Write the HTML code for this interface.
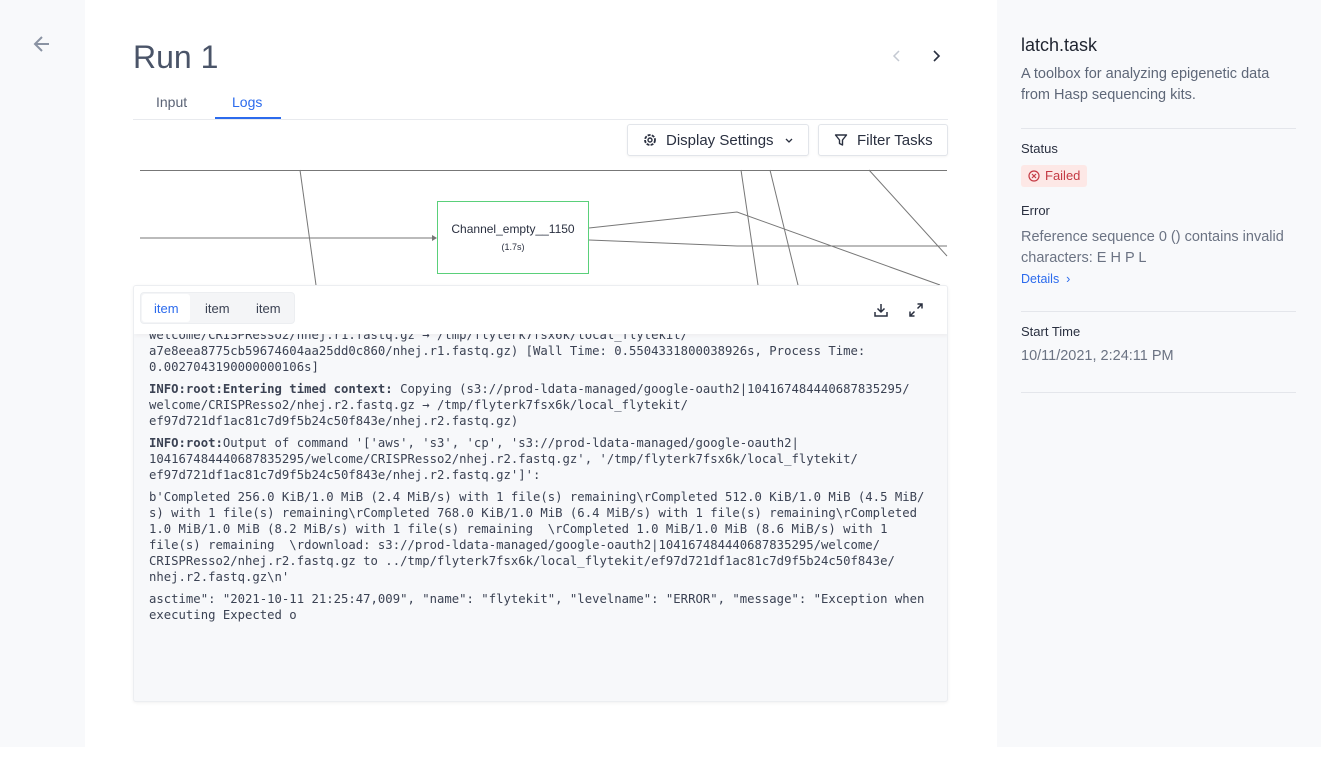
<!DOCTYPE html>
<html><head><meta charset="utf-8"><style>
*{box-sizing:border-box;margin:0;padding:0}
body{width:1321px;height:763px;background:#fff;font-family:"Liberation Sans",sans-serif;position:relative;overflow:hidden}
.left{position:absolute;left:0;top:0;width:85px;height:747px;background:#f8f9fb}
.right{position:absolute;left:997px;top:0;width:324px;height:747px;background:#f8f9fb}
.abs{position:absolute}
.mono{font-family:"DejaVu Sans Mono","Liberation Mono",monospace;font-size:12.27px;line-height:16px;color:#3b4253;white-space:pre}
.btn{position:absolute;top:124px;height:32px;border:1px solid #e2e5ea;border-radius:3px;background:#fff;font-size:15px;color:#2a3040;display:flex;align-items:center;box-shadow:0 1px 2px rgba(0,0,0,.05)}
.lbl{font-size:13px;color:#2a3040}
.hr{position:absolute;left:1021px;width:275px;height:1px;background:#e4e6eb}
</style></head><body>
<div class="left"></div>
<div class="right"></div>
<svg class="abs" style="left:32px;top:34px" width="20" height="20" viewBox="0 0 20 20"><path d="M17 10H3M10 3L3 10l7 7" fill="none" stroke="#8a93a3" stroke-width="2"/></svg>
<div class="abs" style="left:133px;top:39px;font-size:32px;color:#4a5468">Run 1</div>
<svg class="abs" style="left:890px;top:49px" width="14" height="14"><path d="M9 2L4 7l5 5" fill="none" stroke="#c4c9d2" stroke-width="1.5"/></svg>
<svg class="abs" style="left:929px;top:49px" width="14" height="14"><path d="M5 2l5 5-5 5" fill="none" stroke="#2a3040" stroke-width="1.6"/></svg>
<div class="abs" style="left:156px;top:94px;font-size:14px;color:#5a6375">Input</div>
<div class="abs" style="left:232px;top:94px;font-size:14px;color:#2c6bed">Logs</div>
<div class="abs" style="left:133px;top:119px;width:815px;height:1px;background:#e8eaee"></div>
<div class="abs" style="left:215px;top:117px;width:66px;height:2px;background:#2c6bed"></div>
<div class="btn" style="left:627px;width:182px;padding-left:15px">
<svg width="14" height="14" viewBox="0 0 14 14"><circle cx="7" cy="7" r="5" fill="none" stroke="#2a3040" stroke-width="1.8" stroke-dasharray="3 1.2"/><circle cx="7" cy="7" r="2" fill="none" stroke="#2a3040" stroke-width="1.4"/></svg>
<span style="margin-left:9px">Display Settings</span>
<svg style="margin-left:10px" width="10" height="10"><path d="M2 4l3 3 3-3" fill="none" stroke="#2a3040" stroke-width="1.3"/></svg></div>
<div class="btn" style="left:818px;width:130px;padding-left:15px">
<svg width="14" height="14" viewBox="0 0 14 14"><path d="M1.5 2h11L8.5 7v5L5.5 10.5V7z" fill="none" stroke="#2a3040" stroke-width="1.4" stroke-linejoin="round"/></svg>
<span style="margin-left:9px">Filter Tasks</span></div>
<svg class="abs" style="left:0;top:0" width="1000" height="300">
<g stroke="#777" stroke-width="1" fill="none">
<path d="M140 170.5H947"/>
<path d="M300 170L316 285"/>
<path d="M741 170L758 285"/>
<path d="M770 170L798 285"/>
<path d="M869 170L947 256"/>
<path d="M589 228L737 212L940 285"/>
<path d="M589 240L737 246H947"/>
<path d="M140 238H434"/>
</g>
<path d="M432 235l5 3-5 3z" fill="#777"/>
<rect x="437.5" y="201.5" width="151" height="72" fill="#fff" stroke="#5ad07a"/>
<text x="513" y="233" font-size="12" text-anchor="middle" fill="#2a3040" font-family="Liberation Sans">Channel_empty__1150</text>
<text x="513" y="250" font-size="9" text-anchor="middle" fill="#2a3040" font-family="Liberation Sans">(1.7s)</text>
</svg>
<div class="abs" style="left:133px;top:285px;width:815px;height:417px;background:#f7f8fa;border:1px solid #eceef1;border-radius:3px;box-shadow:0 1px 3px rgba(0,0,0,.06);overflow:hidden">
<div class="mono abs" style="left:15px;top:41px">welcome/CRISPResso2/nhej.r1.fastq.gz → /tmp/flyterk7fsx6k/local_flytekit/
a7e8eea8775cb59674604aa25dd0c860/nhej.r1.fastq.gz) [Wall Time: 0.5504331800038926s, Process Time:
0.0027043190000000106s]</div>
<div class="mono abs" style="left:15px;top:95px"><b>INFO:root:Entering timed context:</b> Copying (s3://prod-ldata-managed/google-oauth2|104167484440687835295/
welcome/CRISPResso2/nhej.r2.fastq.gz → /tmp/flyterk7fsx6k/local_flytekit/
ef97d721df1ac81c7d9f5b24c50f843e/nhej.r2.fastq.gz)</div>
<div class="mono abs" style="left:15px;top:149px"><b>INFO:root:</b>Output of command '['aws', 's3', 'cp', 's3://prod-ldata-managed/google-oauth2|
104167484440687835295/welcome/CRISPResso2/nhej.r2.fastq.gz', '/tmp/flyterk7fsx6k/local_flytekit/
ef97d721df1ac81c7d9f5b24c50f843e/nhej.r2.fastq.gz']':</div>
<div class="mono abs" style="left:15px;top:203px">b'Completed 256.0 KiB/1.0 MiB (2.4 MiB/s) with 1 file(s) remaining\rCompleted 512.0 KiB/1.0 MiB (4.5 MiB/
s) with 1 file(s) remaining\rCompleted 768.0 KiB/1.0 MiB (6.4 MiB/s) with 1 file(s) remaining\rCompleted
1.0 MiB/1.0 MiB (8.2 MiB/s) with 1 file(s) remaining  \rCompleted 1.0 MiB/1.0 MiB (8.6 MiB/s) with 1
file(s) remaining  \rdownload: s3://prod-ldata-managed/google-oauth2|104167484440687835295/welcome/
CRISPResso2/nhej.r2.fastq.gz to ../tmp/flyterk7fsx6k/local_flytekit/ef97d721df1ac81c7d9f5b24c50f843e/
nhej.r2.fastq.gz\n'</div>
<div class="mono abs" style="left:15px;top:305px">asctime": "2021-10-11 21:25:47,009", "name": "flytekit", "levelname": "ERROR", "message": "Exception when
executing Expected o</div>
<div class="abs" style="left:0;top:0;width:815px;height:48px;background:#fff;box-shadow:0 2px 4px rgba(0,0,0,.04)">
<div class="abs" style="left:6px;top:6px;width:155px;height:32px;background:#f4f5f7;border:1px solid #eceef1;border-radius:4px"></div>
<div class="abs" style="left:8px;top:8px;width:48px;height:28px;background:#fff;border-radius:3px"></div>
<div class="abs" style="left:20px;top:15px;font-size:13px;color:#2c6bed">item</div>
<div class="abs" style="left:71px;top:15px;font-size:13px;color:#3b4253">item</div>
<div class="abs" style="left:122px;top:15px;font-size:13px;color:#3b4253">item</div>
<svg class="abs" style="left:739px;top:16px" width="16" height="16"><path d="M8 2v8M4.5 6.5L8 10l3.5-3.5M2 10v4h12v-4" fill="none" stroke="#2a3040" stroke-width="1.5"/></svg>
<svg class="abs" style="left:774px;top:16px" width="16" height="16"><path d="M9.5 2H14v4.5M14 2L9.5 6.5M6.5 14H2V9.5M2 14l4.5-4.5" fill="none" stroke="#2a3040" stroke-width="1.5"/></svg>
</div>
</div>
<div class="abs" style="left:1021px;top:35px;font-size:18px;color:#1f2430">latch.task</div>
<div class="abs" style="left:1021px;top:64px;font-size:14.5px;line-height:21px;color:#5e6778">A toolbox for analyzing epigenetic data<br>from Hasp sequencing kits.</div>
<div class="hr" style="top:128px"></div>
<div class="abs lbl" style="left:1021px;top:141px">Status</div>
<div class="abs" style="left:1021px;top:165px;width:66px;height:22px;background:#fde8e6;border-radius:3px;font-size:13px;color:#c43a44;line-height:22px;padding-left:24px">Failed</div>
<svg class="abs" style="left:1027px;top:169px" width="14" height="14"><circle cx="7" cy="7" r="5" fill="none" stroke="#c43a44" stroke-width="1.2"/><path d="M5 5l4 4M9 5l-4 4" stroke="#c43a44" stroke-width="1.2"/></svg>
<div class="abs lbl" style="left:1021px;top:203px">Error</div>
<div class="abs" style="left:1021px;top:227px;font-size:14.5px;line-height:21px;color:#6b7383">Reference sequence 0 () contains invalid<br>characters: E H P L</div>
<div class="abs" style="left:1021px;top:272px;font-size:12.5px;color:#2c6bed">Details &nbsp;›</div>
<div class="hr" style="top:311px"></div>
<div class="abs lbl" style="left:1021px;top:324px">Start Time</div>
<div class="abs" style="left:1021px;top:348px;font-size:14.5px;color:#6b7383">10/11/2021, 2:24:11 PM</div>
<div class="hr" style="top:392px"></div>
</body></html>
